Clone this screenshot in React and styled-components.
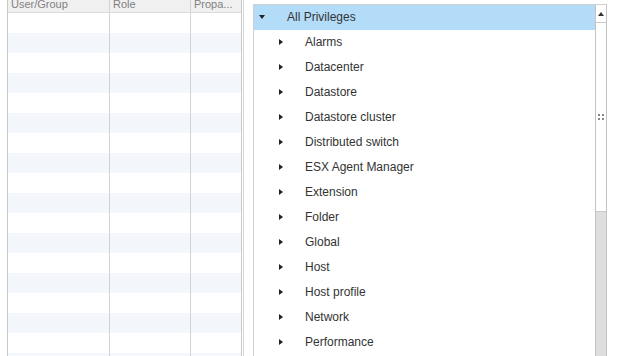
import React from 'react';
import styled, { createGlobalStyle } from 'styled-components';

const GlobalStyle = createGlobalStyle`
    html, body {
        margin: 0;
        padding: 0;
        background: #fff;
        overflow: hidden;
    }
    body {
        font-family: "Liberation Sans", Arial, sans-serif;
    }
`;

const Page = styled.div`
    display: flex;
    align-items: flex-start;
    width: 621px;
    height: 356px;
    padding-left: 7px;
    box-sizing: border-box;
    overflow: hidden;
`;

const Table = styled.div`
    width: 235px;
    height: 356px;
    border-left: 1px solid #c8c8c8;
    border-right: 1px solid #c8c8c8;
    box-sizing: border-box;
    overflow: hidden;
`;

const TableRow = styled.div`
    display: grid;
    grid-template-columns: 102px 81px 50px;
    height: ${p => (p.$header ? 13 : 20)}px;
    background: ${p => (p.$header ? '#f0f0f0' : p.$striped ? '#f3f6fb' : '#fff')};
    border-bottom: ${p => (p.$header ? '1px solid #dcdcdc' : 'none')};
    box-sizing: border-box;
`;

const Cell = styled.div`
    border-right: ${p => (p.$last ? 'none' : '1px solid #d2d2d2')};
    padding-left: 3px;
    font-size: 11px;
    line-height: 9px;
    color: #808080;
    white-space: nowrap;
    overflow: hidden;
`;

const Splitter = styled.div`
    width: 1px;
    height: 356px;
    margin-left: 1px;
    margin-right: 9px;
    background: #d6d6d6;
`;

const TreePanel = styled.div`
    display: flex;
    width: 354px;
    height: 352px;
    margin-top: 4px;
    border-top: 1px solid #cfcfcf;
    border-left: 1px solid #cfcfcf;
    box-sizing: border-box;
`;

const TreeList = styled.div`
    flex: 1;
    display: flex;
    flex-direction: column;
`;

const TreeRow = styled.div`
    display: flex;
    align-items: center;
    height: 25px;
    flex-shrink: 0;
    padding-left: ${p => 5 + p.$level * 20}px;
    padding-bottom: 2px;
    box-sizing: border-box;
    background: ${p => (p.$selected ? '#b3dcf9' : 'transparent')};
`;

const Caret = styled.span`
    width: 0;
    height: 0;
    ${p => p.$open
        ? `border-left: 3.5px solid transparent;
           border-right: 3.5px solid transparent;
           border-top: 4px solid #222;`
        : `border-top: 3.5px solid transparent;
           border-bottom: 3.5px solid transparent;
           border-left: 4px solid #222;`}
`;

const Label = styled.span`
    margin-left: 22px;
    font-size: 12px;
    color: #333;
    white-space: nowrap;
`;

const Scrollbar = styled.div`
    width: 12px;
    display: flex;
    flex-direction: column;
    border-left: 1px solid #c4c4c4;
    border-right: 1px solid #c4c4c4;
    box-sizing: border-box;
`;

const ScrollButton = styled.div`
    height: 18px;
    display: flex;
    justify-content: center;
    align-items: center;
    border-bottom: 1px solid #c8c8c8;
    box-sizing: border-box;
    background: #fff;

    &:after {
        content: "";
        border-left: 3px solid transparent;
        border-right: 3px solid transparent;
        border-bottom: 4px solid #333;
    }
`;

const Thumb = styled.div`
    height: 189px;
    display: flex;
    justify-content: center;
    align-items: center;
    background: #fff;
    border-bottom: 1px solid #c8c8c8;
    box-sizing: border-box;
`;

const Grip = styled.div`
    display: grid;
    grid-template-columns: 2px 2px;
    gap: 2px;

    span {
        width: 2px;
        height: 2px;
        background: #888;
    }
`;

const Track = styled.div`
    flex: 1;
    background: #dedede;
`;

const privileges = [
    'Alarms',
    'Datacenter',
    'Datastore',
    'Datastore cluster',
    'Distributed switch',
    'ESX Agent Manager',
    'Extension',
    'Folder',
    'Global',
    'Host',
    'Host profile',
    'Network',
    'Performance',
    'Permissions',
];

const App = () => {
    const rows = Array.from({ length: 18 });

    return (
        <>
            <GlobalStyle />
            <Page>
                <Table>
                    <TableRow $header>
                        <Cell>User/Group</Cell>
                        <Cell>Role</Cell>
                        <Cell $last>Propa...</Cell>
                    </TableRow>
                    {rows.map((_, i) => (
                        <TableRow key={i} $striped={i % 2 === 1}>
                            <Cell />
                            <Cell />
                            <Cell $last />
                        </TableRow>
                    ))}
                </Table>
                <Splitter />
                <TreePanel>
                    <TreeList>
                        <TreeRow $level={0} $selected>
                            <Caret $open />
                            <Label>All Privileges</Label>
                        </TreeRow>
                        {privileges.map(name => (
                            <TreeRow key={name} $level={1}>
                                <Caret />
                                <Label>{name}</Label>
                            </TreeRow>
                        ))}
                    </TreeList>
                    <Scrollbar>
                        <ScrollButton />
                        <Thumb>
                            <Grip>
                                <span /><span /><span /><span />
                            </Grip>
                        </Thumb>
                        <Track />
                    </Scrollbar>
                </TreePanel>
            </Page>
        </>
    );
};

export default App;
